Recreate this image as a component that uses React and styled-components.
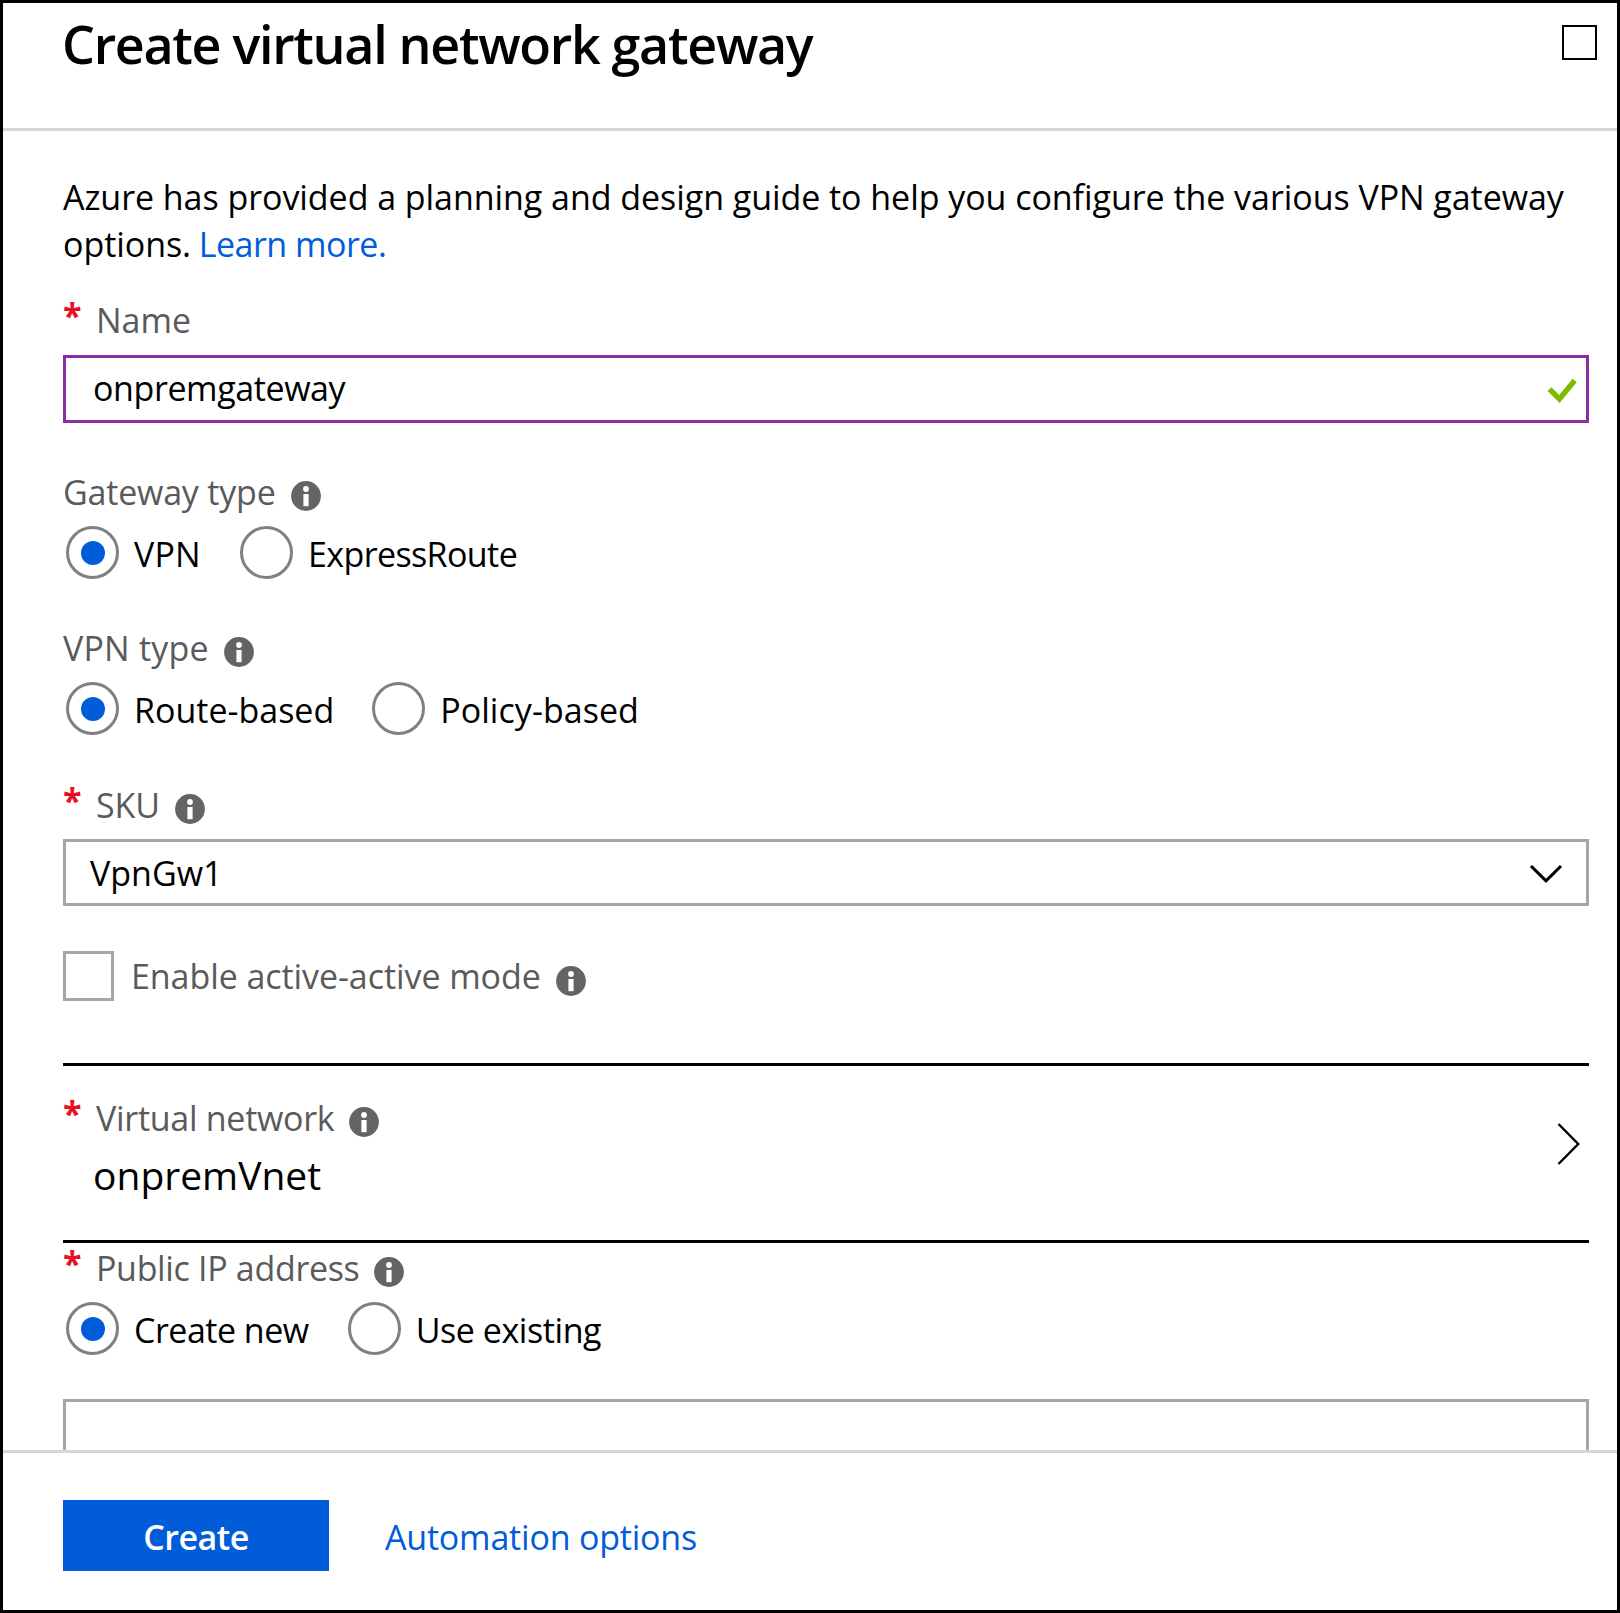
import React from "react";
import styled, { createGlobalStyle, css } from "styled-components";

const color = {
  text: "#000000",
  label: "#5a5a5a",
  link: "#015cda",
  required: "#e81123",
  focus: "#8a2da5",
  border: "#a6a6a6",
  divider: "#d6d6d6",
  info: "#646464",
  valid: "#7fba00",
};

const GlobalStyle = createGlobalStyle`
  *, *::before, *::after { box-sizing: border-box; }
  body { margin: 0; background: #fff; }
`;

const Panel = styled.main`
  display: flex;
  flex-direction: column;
  width: 1620px;
  height: 1613px;
  border: 3px solid #000;
  background: #fff;
  color: ${color.text};
  font: 400 34px/47px "Open Sans", "Noto Sans", sans-serif;
  white-space: nowrap;
`;

const Header = styled.header`
  flex: none;
  display: flex;
  justify-content: space-between;
  align-items: flex-start;
  height: 128px;
  padding: 5px 20px 0 59px;
  border-bottom: 3px solid ${color.divider};
`;

const Title = styled.h1`
  margin: 0;
  font-size: 52px;
  line-height: 72px;
  font-weight: 600;
  letter-spacing: -1.3px;
`;

const MaximizeButton = styled.button`
  width: 35px;
  height: 35px;
  margin-top: 17px;
  padding: 0;
  border: 2px solid #000;
  background: #fff;
`;

const Body = styled.section`
  flex: 1;
  min-height: 0;
  overflow: hidden;
  padding: 43px 28px 0 60px;
`;

const Intro = styled.p`
  margin: 0 0 28px;
  letter-spacing: -0.05px;
`;

const Link = styled.a`
  color: ${color.link};
  text-decoration: none;
  letter-spacing: ${(p) => p.$spacing}px;
`;

const IntroLink = styled(Link)`
  margin-left: -1px;
`;

const Field = styled.div`
  margin-top: ${(p) => p.$top || 0}px;
`;

const LabelRow = styled.div`
  display: flex;
  align-items: center;
  height: 47px;
  color: ${color.label};
`;

const Required = styled.span`
  flex: none;
  width: 33px;
  margin-top: -9px;
  color: ${color.required};
  font-weight: 700;
`;

const Text = styled.span`
  letter-spacing: ${(p) => p.$spacing}px;
`;

const LabelText = styled(Text)`
  margin-top: 2px;
`;

const InfoSvg = styled.svg`
  flex: none;
  width: 30px;
  height: 30px;
  margin: 9px 0 0 15px;
`;

const box = css`
  display: flex;
  align-items: center;
  justify-content: space-between;
  border: 3px solid ${color.border};
`;

const TextBox = styled.div`
  ${box}
  height: 68px;
  margin-top: ${(p) => p.$top}px;
  padding: 0 8px 2px 27px;
  ${(p) => p.$focused && css`border-color: ${color.focus};`}
`;

const Select = styled.div`
  ${box}
  height: 67px;
  margin-top: 11px;
  padding: 1px 23px 0 24px;
`;

const CheckSvg = styled.svg`
  width: 32px;
  height: 28px;
  margin-top: 5px;
`;

const ChevronDownSvg = styled.svg`
  width: 34px;
  height: 20px;
  margin-top: 2px;
`;

const ChevronRightSvg = styled.svg`
  flex: none;
  width: 24px;
  height: 42px;
  margin: 57px 8px 0 0;
`;

const RadioGroup = styled.div`
  display: flex;
  gap: ${(p) => p.$gap}px;
  height: 53px;
  margin: 11px 0 0 3px;
`;

const RadioOption = styled.label`
  display: flex;
  align-items: center;
  gap: 15px;
`;

const RadioText = styled(Text)`
  padding-top: 3px;
`;

const RadioCircle = styled.span`
  display: grid;
  place-items: center;
  width: 53px;
  height: 53px;
  border: 3px solid #808080;
  border-radius: 50%;

  &::after {
    content: "";
    width: 24px;
    height: 24px;
    border-radius: 50%;
    background: ${(p) => (p.$checked ? color.link : "transparent")};
  }
`;

const CheckboxRow = styled.label`
  display: flex;
  align-items: center;
  height: 50px;
  margin-top: 45px;
  color: ${color.label};
`;

const Checkbox = styled.span`
  width: 51px;
  height: 50px;
  margin-right: 17px;
  border: 3px solid ${color.border};
`;

const Picker = styled.div`
  display: flex;
  justify-content: space-between;
  align-items: flex-start;
  height: 180px;
  margin: 62px 0 1px;
  border: solid #000;
  border-width: 3px 0;
`;

const PickerContent = styled.div`
  padding-top: 28px;
`;

const PickerValue = styled.div`
  margin: 7px 0 0 30px;
  font-size: 39px;
  line-height: 54px;
`;

const Footer = styled.footer`
  flex: none;
  display: flex;
  align-items: flex-start;
  gap: 56px;
  height: 160px;
  padding: 47px 60px 0;
  border-top: 3px solid ${color.divider};
`;

const CreateButton = styled.button`
  width: 266px;
  height: 71px;
  padding: 3px 0 0;
  border: 0;
  background: ${color.link};
  color: #fff;
  font: inherit;
  font-weight: 600;
  letter-spacing: -0.5px;
`;

const FooterLink = styled(Link)`
  padding-top: 14px;
`;

function InfoIcon() {
  return (
    <InfoSvg viewBox="0 0 30 30" aria-label="Information">
      <circle cx="15" cy="15" r="14.9" fill={color.info} />
      <circle cx="15" cy="8" r="2.9" fill="#fff" />
      <rect x="12.4" y="13" width="5.2" height="12.2" fill="#fff" />
    </InfoSvg>
  );
}

function Label({ text, spacing, required, info }) {
  return (
    <LabelRow>
      {required && <Required>*</Required>}
      <LabelText $spacing={spacing}>{text}</LabelText>
      {info && <InfoIcon />}
    </LabelRow>
  );
}

function Radios({ options, gap }) {
  return (
    <RadioGroup $gap={gap}>
      {options.map(([text, spacing], i) => (
        <RadioOption key={text}>
          <RadioCircle $checked={i === 0} />
          <RadioText $spacing={spacing}>{text}</RadioText>
        </RadioOption>
      ))}
    </RadioGroup>
  );
}

export default function App() {
  return (
    <Panel>
      <GlobalStyle />
      <Header>
        <Title>Create virtual network gateway</Title>
        <MaximizeButton aria-label="Maximize" />
      </Header>

      <Body>
        <Intro>
          Azure has provided a planning and design guide to help you configure the various VPN gateway
          <br />
          options. <IntroLink $spacing={-0.51}>Learn more.</IntroLink>
        </Intro>

        <Field>
          <Label text="Name" spacing={0} required />
          <TextBox $top={12} $focused>
            <Text $spacing={-0.4}>onpremgateway</Text>
            <CheckSvg viewBox="0 0 32 28">
              <path d="M3.5 12.2 L13.4 22 L28.7 3.6" fill="none" stroke={color.valid} strokeWidth="5.4" />
            </CheckSvg>
          </TextBox>
        </Field>

        <Field $top={45}>
          <Label text="Gateway type" spacing={-0.2} info />
          <Radios gap={39} options={[["VPN", 0.2], ["ExpressRoute", -0.6]]} />
        </Field>

        <Field $top={45}>
          <Label text="VPN type" spacing={0.2} info />
          <Radios gap={38} options={[["Route-based", 0], ["Policy-based", 0.05]]} />
        </Field>

        <Field $top={46}>
          <Label text="SKU" spacing={-0.1} required info />
          <Select>
            <Text $spacing={0}>VpnGw1</Text>
            <ChevronDownSvg viewBox="0 0 34 20">
              <path d="M2 2 L17 16.8 L32 2" fill="none" stroke="#000" strokeWidth="3.1" />
            </ChevronDownSvg>
          </Select>
        </Field>

        <CheckboxRow>
          <Checkbox />
          <Text $spacing={-0.07}>Enable active-active mode</Text>
          <InfoIcon />
        </CheckboxRow>

        <Picker>
          <PickerContent>
            <Label text="Virtual network" spacing={-0.28} required info />
            <PickerValue>onpremVnet</PickerValue>
          </PickerContent>
          <ChevronRightSvg viewBox="0 0 24 42">
            <path d="M1.5 1 L21.2 21 L1.5 41" fill="none" stroke="#000" strokeWidth="2.4" />
          </ChevronRightSvg>
        </Picker>

        <Field>
          <Label text="Public IP address" spacing={-0.33} required info />
          <Radios gap={39} options={[["Create new", -0.5], ["Use existing", -0.43]]} />
          <TextBox $top={44} />
        </Field>
      </Body>

      <Footer>
        <CreateButton>Create</CreateButton>
        <FooterLink $spacing={-0.2}>Automation options</FooterLink>
      </Footer>
    </Panel>
  );
}
